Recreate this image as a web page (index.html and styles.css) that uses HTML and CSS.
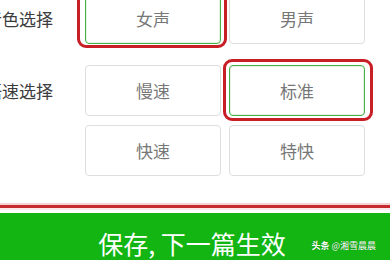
FILE: index.html
```html
<!DOCTYPE html>
<html lang="zh">
<head>
<meta charset="utf-8">
<link rel="stylesheet" href="styles.css">
</head>
<body>
<div class="page">
  <div class="group group-voice">
    <div class="label">音色选择</div>
    <div class="options">
      <div class="opt selected"><span class="mark mark-voice"></span>女声</div>
      <div class="opt">男声</div>
    </div>
  </div>
  <div class="group group-speed">
    <div class="label">语速选择</div>
    <div class="options">
      <div class="opt">慢速</div>
      <div class="opt selected"><span class="mark mark-speed"></span>标准</div>
      <div class="opt">快速</div>
      <div class="opt">特快</div>
    </div>
  </div>
  <div class="redline"></div>
  <div class="save-bar">
    <span class="save-text">保存, 下一篇生效</span>
    <span class="watermark"><b>头条</b> @湘雪晨晨</span>
  </div>
</div>
</body>
</html>
```
FILE: styles.css
```css
html, body {
  margin: 0;
  padding: 0;
  background: #ffffff;
}
body {
  width: 390px;
  height: 260px;
  overflow: hidden;
  font-family: "Noto Sans CJK SC", "Noto Sans", sans-serif;
}
.page {
  display: flex;
  flex-direction: column;
}
.group {
  display: flex;
  align-items: flex-start;
}
.group-voice {
  margin-top: -7px;
}
.group-speed {
  margin-top: 21px;
}
.label {
  width: 53px;
  flex: 0 0 53px;
  margin-right: 32px;
  height: 51px;
  line-height: 51px;
  text-align: right;
  white-space: nowrap;
  direction: rtl;
  font-size: 17px;
  color: #3c3c3c;
}
.options {
  display: grid;
  grid-template-columns: 136px 136px;
  gap: 9px 8px;
}
.opt {
  position: relative;
  box-sizing: border-box;
  height: 51px;
  border: 1px solid #dedede;
  border-radius: 4px;
  display: flex;
  align-items: center;
  justify-content: center;
  font-size: 17px;
  color: #777777;
  background: #ffffff;
}
.opt.selected {
  border-color: #45b045;
  box-shadow: inset 0 0 0 1px #e6f4e6;
}
.mark {
  position: absolute;
  border: 3px solid #c81e26;
  border-radius: 9px;
  pointer-events: none;
}
.mark-voice {
  left: -9px;
  right: -7px;
  top: -20px;
  bottom: -5px;
}
.mark-speed {
  left: -7px;
  right: -9px;
  top: -7px;
  bottom: -6px;
}
.redline {
  margin-top: 29px;
  height: 3px;
  background: #c62a2e;
  box-shadow: 0 -2px 0 #f5d2d2, 0 2px 0 #fbeaea;
}
.save-bar {
  position: relative;
  margin-top: 5px;
  height: 60px;
  background: #12b512;
  display: flex;
  justify-content: center;
}
.save-text {
  margin-top: 14px;
  margin-left: -6px;
  font-size: 25px;
  line-height: 1.3;
  color: #ffffff;
}
.watermark {
  position: absolute;
  right: 14px;
  top: 26px;
  font-size: 9px;
  color: #ffffff;
  text-shadow: 0 0 1px rgba(0,0,0,0.35);
  white-space: nowrap;
}
.watermark b {
  font-weight: 700;
}
```
